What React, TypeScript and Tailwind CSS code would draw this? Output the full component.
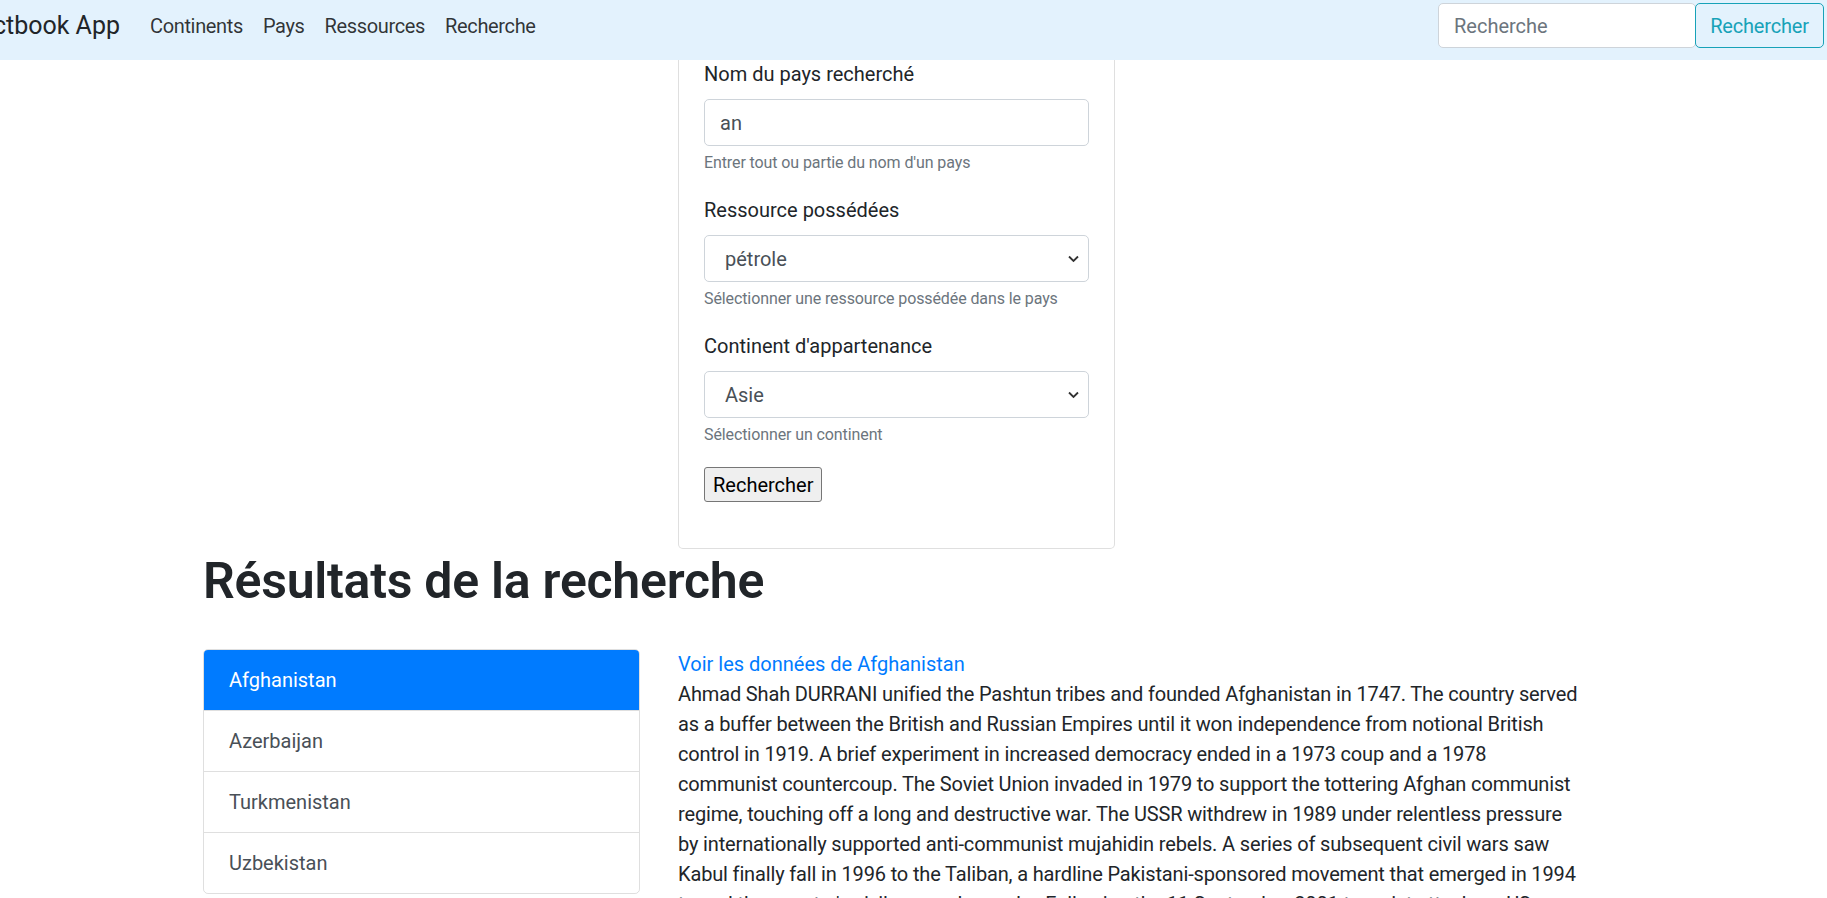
import React from 'react';

const navLinks = ['Continents', 'Pays', 'Ressources', 'Recherche'];

const countries = ['Afghanistan', 'Azerbaijan', 'Turkmenistan', 'Uzbekistan'];

const lines = [
  'Ahmad Shah DURRANI unified the Pashtun tribes and founded Afghanistan in 1747. The country served',
  'as a buffer between the British and Russian Empires until it won independence from notional British',
  'control in 1919. A brief experiment in increased democracy ended in a 1973 coup and a 1978',
  'communist countercoup. The Soviet Union invaded in 1979 to support the tottering Afghan communist',
  'regime, touching off a long and destructive war. The USSR withdrew in 1989 under relentless pressure',
  'by internationally supported anti-communist mujahidin rebels. A series of subsequent civil wars saw',
  'Kabul finally fall in 1996 to the Taliban, a hardline Pakistani-sponsored movement that emerged in 1994',
  "to end the country's civil war and anarchy. Following the 11 September 2001 terrorist attacks, a US,",
  'Allied, and anti-Taliban Northern Alliance military action toppled the Taliban for sheltering Usama BIN LADIN.'
];

const Chevron = () => (
  <svg
    className="pointer-events-none absolute right-[10px] top-1/2 -translate-y-1/2"
    width="11"
    height="7"
    viewBox="0 0 11 7"
    fill="none"
  >
    <path d="M1 1l4.5 4.5L10 1" stroke="#333" strokeWidth="1.8" />
  </svg>
);

const SelectField = ({ value }: { value: string }) => (
  <div className="relative">
    <select
      defaultValue={value}
      className="block h-[47px] w-full appearance-none rounded-[5px] border border-[#ced4da] bg-white pl-[20px] pr-[30px] text-[20px] text-[#495057] outline-none"
    >
      <option>{value}</option>
    </select>
    <Chevron />
  </div>
);

const Navbar = () => (
  <nav className="fixed inset-x-0 top-0 z-10 flex h-[60px] items-start bg-[#e3f2fd] pt-[3px]">
    <div className="flex h-[45px] w-[120px] items-center justify-end overflow-hidden">
      <span className="whitespace-nowrap text-[25px] text-[#212529]">Factbook App</span>
    </div>
    <ul className="ml-[20px] flex h-[45px] items-center">
      {navLinks.map((link) => (
        <li key={link} className="px-[10px] text-[20px] tracking-[-0.35px] text-black/80">
          {link}
        </li>
      ))}
    </ul>
    <div className="ml-auto mr-[3px] flex h-[45px]">
      <input
        placeholder="Recherche"
        className="h-full w-[258px] rounded-[5px] border border-[#ced4da] bg-white px-[15px] text-[20px] text-[#495057] outline-none placeholder:text-[#6c757d]"
      />
      <button className="-ml-px h-full w-[129px] rounded-[5px] border border-[#17a2b8] text-center text-[20px] tracking-[-0.2px] text-[#17a2b8]">
        Rechercher
      </button>
    </div>
  </nav>
);

const SearchForm = () => (
  <div className="rounded-[5px] border border-black/[0.125] bg-white px-[25px] pb-[46px] pt-[25px]">
    <div className="mb-[20px]">
      <label className="mb-[10px] block leading-[30px]">Nom du pays recherché</label>
      <input
        defaultValue="an"
        className="block h-[47px] w-full rounded-[5px] border border-[#ced4da] px-[15px] text-[20px] text-[#495057] outline-none"
      />
      <small className="mt-[5px] block text-[16px] leading-[24px] tracking-[-0.1px] text-[#6c757d]">
        Entrer tout ou partie du nom d'un pays
      </small>
    </div>
    <div className="mb-[20px]">
      <label className="mb-[10px] block leading-[30px]">Ressource possédées</label>
      <SelectField value="pétrole" />
      <small className="mt-[5px] block text-[16px] leading-[24px] tracking-[-0.1px] text-[#6c757d]">
        Sélectionner une ressource possédée dans le pays
      </small>
    </div>
    <div className="mb-[20px]">
      <label className="mb-[10px] block leading-[30px]">Continent d'appartenance</label>
      <SelectField value="Asie" />
      <small className="mt-[5px] block text-[16px] leading-[24px] tracking-[-0.1px] text-[#6c757d]">
        Sélectionner un continent
      </small>
    </div>
    <button className="h-[35px] rounded-[3px] border border-[#767676] bg-[#efefef] px-[8px] text-[20px] leading-[30px] text-black">
      Rechercher
    </button>
  </div>
);

const App = () => {
  return (
    <div className="min-h-screen bg-white font-[Roboto,sans-serif] text-[20px] leading-[30px] text-[#212529]">
      <Navbar />
      <main className="pl-[203px] pt-[33px]">
        <div className="w-[1387px]">
          <div className="grid grid-cols-3 gap-x-[38px]">
            <div />
            <SearchForm />
          </div>

          <h1 className="mt-[2px] text-[50px] font-semibold leading-[60px] tracking-[-0.25px]">
            Résultats de la recherche
          </h1>

          <div className="mt-[38px] grid grid-cols-[437px_1fr] gap-x-[38px]">
            <div className="self-start overflow-hidden rounded-[5px] border border-black/[0.125]">
              {countries.map((c, i) => (
                <div
                  key={c}
                  className={
                    i === 0
                      ? 'h-[60px] bg-[#007bff] px-[25px] py-[15px] text-white'
                      : 'h-[61px] border-t border-black/[0.125] px-[25px] py-[15px] text-[#495057]'
                  }
                >
                  {c}
                </div>
              ))}
            </div>
            <div>
              <a className="block text-[#007bff]">Voir les données de Afghanistan</a>
              <p className="tracking-[-0.15px]">
                {lines.map((l) => (
                  <span key={l} className="block whitespace-nowrap">
                    {l}
                  </span>
                ))}
              </p>
            </div>
          </div>
        </div>
      </main>
    </div>
  );
};

export default App;
